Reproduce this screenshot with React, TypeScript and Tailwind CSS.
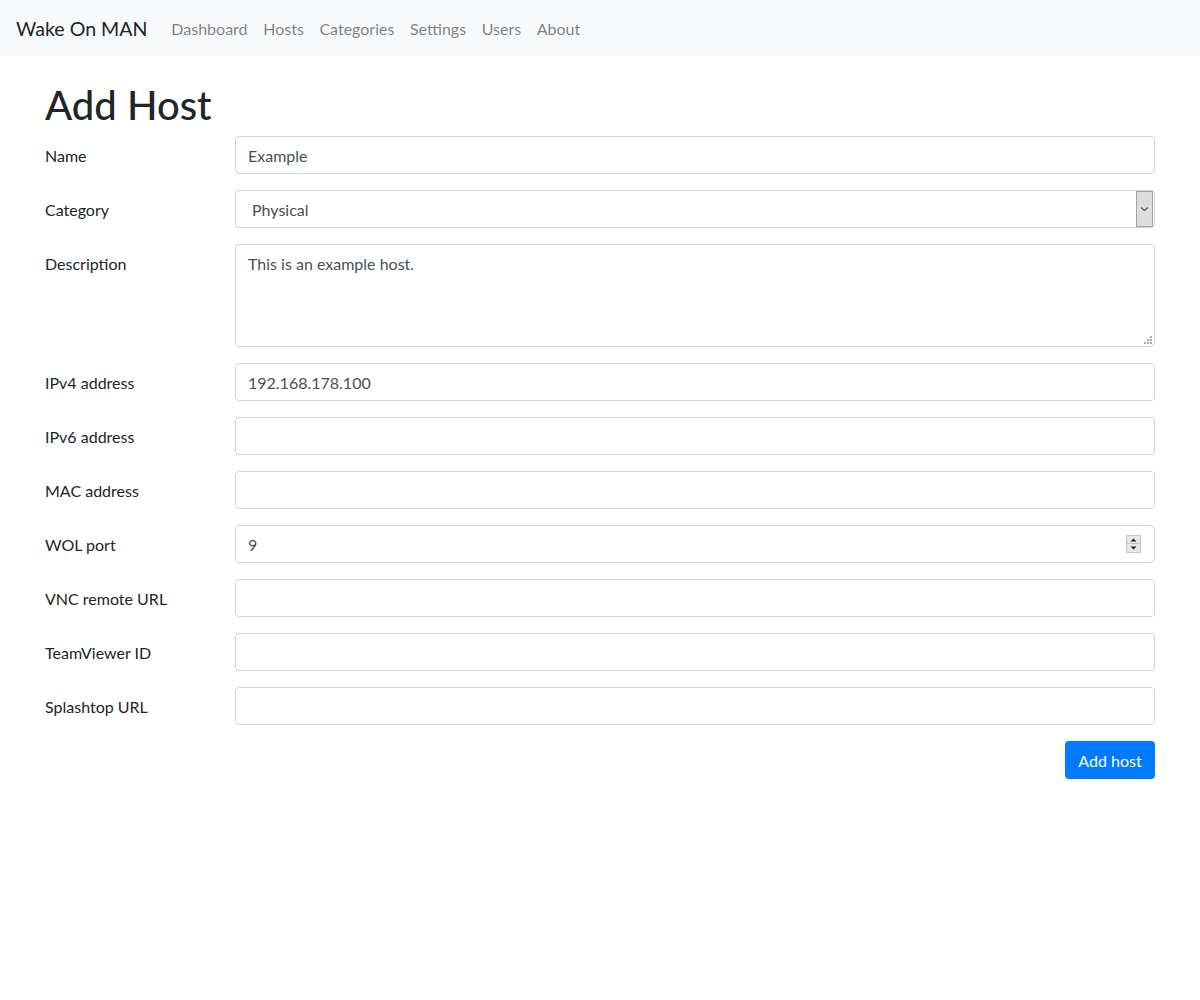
const FONT = "font-['Lato','Liberation_Sans',sans-serif]";

const NAV_LINKS = ["Dashboard", "Hosts", "Categories", "Settings", "Users", "About"];

type Field = {
  label: string;
  value?: string;
  kind?: "text" | "select" | "textarea" | "number";
};

const FIELDS: Field[] = [
  { label: "Name", value: "Example" },
  { label: "Category", value: "Physical", kind: "select" },
  { label: "Description", value: "This is an example host.", kind: "textarea" },
  { label: "IPv4 address", value: "192.168.178.100" },
  { label: "IPv6 address" },
  { label: "MAC address" },
  { label: "WOL port", value: "9", kind: "number" },
  { label: "VNC remote URL" },
  { label: "TeamViewer ID" },
  { label: "Splashtop URL" },
];

function SelectButton() {
  return (
    <div className="flex h-[36px] w-[17px] items-center justify-center border border-[#a3a3a3] bg-[#dddddd]">
      <svg width="9" height="6" viewBox="0 0 9 6" fill="none">
        <path d="M1 1.5 L4.5 4.5 L8 1.5" stroke="#555" strokeWidth="1.2" />
      </svg>
    </div>
  );
}

function Spinner() {
  return (
    <div className="flex w-[15px] flex-col border border-[#c4c4c4] bg-[#e6e6e6]">
      <div className="flex h-[8px] items-center justify-center border-b border-[#c4c4c4]">
        <svg width="7" height="4" viewBox="0 0 7 4">
          <path d="M0.5 3.5 L3.5 0.5 L6.5 3.5 Z" fill="#222" />
        </svg>
      </div>
      <div className="flex h-[8px] items-center justify-center">
        <svg width="7" height="4" viewBox="0 0 7 4">
          <path d="M0.5 0.5 L3.5 3.5 L6.5 0.5 Z" fill="#222" />
        </svg>
      </div>
    </div>
  );
}

function ResizeGrip() {
  const dots = [
    [6, 0],
    [3, 3],
    [6, 3],
    [0, 6],
    [3, 6],
    [6, 6],
  ];
  return (
    <svg width="8" height="8" viewBox="0 0 8 8">
      {dots.map(([x, y]) => (
        <rect key={`${x}-${y}`} x={x} y={y} width="2" height="2" fill="#a8a8a8" />
      ))}
    </svg>
  );
}

function Control({ field }: { field: Field }) {
  if (field.kind === "select") {
    return (
      <div className="flex h-[38px] items-center justify-between rounded-[4px] border border-[#ced4da] bg-white pl-[16px] pr-[1px] text-[#495057]">
        <span className="pt-[2px]">{field.value}</span>
        <SelectButton />
      </div>
    );
  }
  if (field.kind === "textarea") {
    return (
      <div className="flex h-[103px] flex-col justify-between rounded-[4px] border border-[#ced4da] bg-white px-3 pt-[7px] pb-[2px] text-[#495057]">
        <span>{field.value}</span>
        <div className="flex justify-end">
          <div className="-mr-[10px]">
            <ResizeGrip />
          </div>
        </div>
      </div>
    );
  }
  if (field.kind === "number") {
    return (
      <div className="flex h-[38px] items-center justify-between rounded-[4px] border border-[#ced4da] bg-white pl-3 pr-[13px] text-[#495057]">
        <span className="pt-[2px]">{field.value}</span>
        <Spinner />
      </div>
    );
  }
  return (
    <div className="flex h-[38px] items-center rounded-[4px] border border-[#ced4da] bg-white px-3 text-[#495057]">
      <span className="pt-[2px]">{field.value}</span>
    </div>
  );
}

export default function App() {
  return (
    <div className={`min-h-[1000px] bg-white text-[16px] leading-6 text-[#212529] ${FONT}`}>
      <nav className="flex h-[56px] items-center bg-[#f8f9fa] px-4 pt-[2px]">
        <span className="mr-4 text-[19.6px] leading-[30px] text-[#212529]">Wake On MAN</span>
        <div className="flex">
          {NAV_LINKS.map((link) => (
            <span key={link} className="px-[7.8px] text-[rgba(0,0,0,0.5)]">
              {link}
            </span>
          ))}
        </div>
      </nav>

      <div className="mx-auto w-[1140px] px-[15px]">
        <h1 className="mt-6 mb-2 pt-[3px] text-[40px] leading-[45px] font-medium">Add Host</h1>
        <div className="flex flex-col gap-4">
          {FIELDS.map((field) => (
            <div key={field.label} className="flex">
              <label className="w-[190px] shrink-0 pt-[8px] pb-[6px]">{field.label}</label>
              <div className="flex-1">
                <Control field={field} />
              </div>
            </div>
          ))}
          <div className="flex justify-end">
            <button className="flex h-[38px] w-[90px] items-center justify-center rounded-[4px] bg-[#007bff] pt-[2px] text-white">
              Add host
            </button>
          </div>
        </div>
      </div>
    </div>
  );
}
